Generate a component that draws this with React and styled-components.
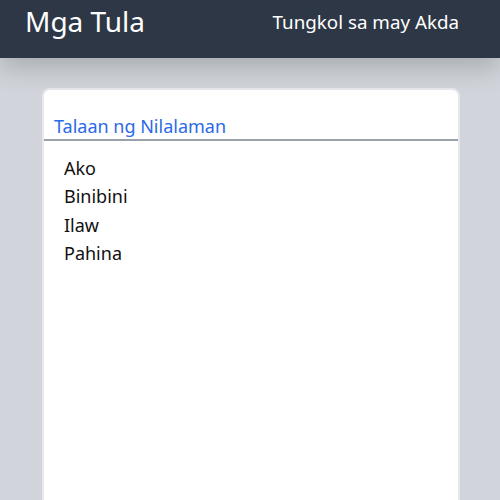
import React from "react";
import styled, { createGlobalStyle } from "styled-components";

const Global = createGlobalStyle`
  html, body { margin: 0; padding: 0; height: 100%; }
  body { font-family: "Noto Sans", "Open Sans", sans-serif; background: #d1d5db; }
  #root { min-height: 100%; }
`;

const Page = styled.div`
  min-height: 500px;
  display: flex;
  flex-direction: column;
  background: #d1d5db;
`;

const Header = styled.header`
  position: relative;
  z-index: 1;
  height: 58px;
  box-sizing: border-box;
  background: #2e3745;
  display: flex;
  align-items: center;
  justify-content: space-between;
  padding: 0 41px 14px 25px;
  box-shadow: 0 8px 28px rgba(0, 0, 0, 0.22);
`;

const Title = styled.h1`
  margin: 0;
  font-size: 28px;
  line-height: 1.2;
  font-weight: 400;
  color: #ffffff;
`;

const NavLink = styled.a`
  color: #ffffff;
  font-size: 18.8px;
  line-height: 1.2;
  text-decoration: none;
`;

const Main = styled.main`
  flex: 1;
  display: flex;
  padding: 30px 40px 0 42px;
`;

const Card = styled.section`
  flex: 1;
  background: #ffffff;
  border: 2px solid #e6e8ec;
  border-bottom: none;
  border-radius: 8px 8px 0 0;
  padding-top: 24px;
`;

const CardTitle = styled.h2`
  margin: 0;
  padding: 0 10px 1px;
  font-size: 18px;
  line-height: 24px;
  font-weight: 400;
  color: #2b6ae6;
  border-bottom: 2px solid #9aa1ab;
`;

const List = styled.ul`
  list-style: none;
  margin: 0;
  padding: 13px 20px;
`;

const Item = styled.li`
  font-size: 18px;
  line-height: 28.3px;
  color: #111111;
`;

const items = ["Ako", "Binibini", "Ilaw", "Pahina"];

export default function App() {
  return (
    <Page>
      <Global />
      <Header>
        <Title>Mga Tula</Title>
        <NavLink href="#">Tungkol sa may Akda</NavLink>
      </Header>
      <Main>
        <Card>
          <CardTitle>Talaan ng Nilalaman</CardTitle>
          <List>
            {items.map((t) => (
              <Item key={t}>{t}</Item>
            ))}
          </List>
        </Card>
      </Main>
    </Page>
  );
}
